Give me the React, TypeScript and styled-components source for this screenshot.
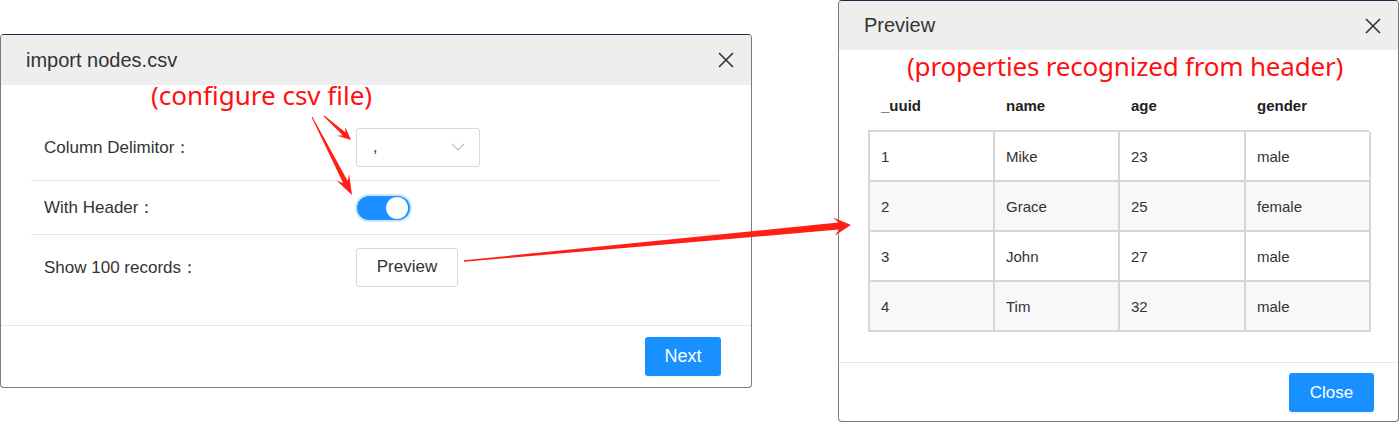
import React from "react";
import styled, { createGlobalStyle } from "styled-components";

const Global = createGlobalStyle`
  html, body { margin: 0; padding: 0; background: #ffffff; }
  body { font-family: "Liberation Sans", Arial, sans-serif; color: #333; }
  * { box-sizing: border-box; }
`;

const Canvas = styled.div`
  position: relative;
  width: 1400px;
  height: 422px;
  display: flex;
  align-items: flex-start;
  overflow: hidden;
`;

const Dialog = styled.div<{ $top: number; $left: number; $width: number }>`
  margin-top: ${(p) => p.$top}px;
  margin-left: ${(p) => p.$left}px;
  width: ${(p) => p.$width}px;
  background: #fff;
  border: 1px solid #7a7a7a;
  border-top-color: #1c2a4c;
  border-radius: 4px;
  display: flex;
  flex-direction: column;
  overflow: hidden;
`;

const Header = styled.div<{ $h: number }>`
  height: ${(p) => p.$h}px;
  background: #eeeeee;
  display: flex;
  align-items: center;
  justify-content: space-between;
  padding: 0 16px 0 25px;
`;

const Title = styled.div`
  font-size: 20px;
  color: #333;
`;

const CloseIcon = () => (
  <svg width="18" height="18" viewBox="0 0 18 18">
    <path d="M2 2 L16 16 M16 2 L2 16" stroke="#333" strokeWidth="1.6" fill="none" />
  </svg>
);

const FormBody = styled.div`
  padding: 29px 30px 26px 30px;
  display: flex;
  flex-direction: column;
`;

const FormRow = styled.div<{ $h: number; $divider?: boolean }>`
  height: ${(p) => p.$h}px;
  display: grid;
  grid-template-columns: 312px 1fr;
  align-items: center;
  padding-left: 13px;
  margin-right: 1px;
  border-bottom: ${(p) => (p.$divider ? "1px solid #e8e8e8" : "none")};
`;

const Label = styled.div`
  font-size: 17px;
  color: #333;
  white-space: nowrap;
`;

const Select = styled.div`
  width: 124px;
  height: 39px;
  border: 1px solid #d9d9d9;
  border-radius: 3px;
  display: flex;
  align-items: center;
  justify-content: space-between;
  padding: 0 14px 0 16px;
  font-size: 16px;
  color: #333;
`;

const Chevron = () => (
  <svg width="14" height="8" viewBox="0 0 14 8">
    <path d="M1 1 L7 7 L13 1" stroke="#bfbfbf" strokeWidth="1.2" fill="none" />
  </svg>
);

const Switch = styled.div`
  width: 53px;
  height: 24px;
  margin-left: 1px;
  border-radius: 12px;
  background: #1890ff;
  box-shadow: 0 0 0 2px rgba(24, 144, 255, 0.22);
  position: relative;
`;

const Knob = styled.div`
  position: absolute;
  right: 2px;
  top: 1px;
  width: 22px;
  height: 22px;
  border-radius: 50%;
  background: #fff;
`;

const GhostButton = styled.button`
  width: 102px;
  height: 39px;
  border: 1px solid #d9d9d9;
  border-radius: 3px;
  background: #fff;
  font-family: "Liberation Sans", Arial, sans-serif;
  font-size: 17px;
  color: #333;
  padding: 0;
`;

const Footer = styled.div<{ $pt: number; $pr: number; $pb: number }>`
  border-top: 1px solid #e8e8e8;
  display: flex;
  justify-content: flex-end;
  padding: ${(p) => `${p.$pt}px ${p.$pr}px ${p.$pb}px 0`};
`;

const PrimaryButton = styled.button<{ $w: number; $fs: number }>`
  width: ${(p) => p.$w}px;
  height: 39px;
  border: none;
  border-radius: 3px;
  background: #1890ff;
  color: #fff;
  font-family: "Liberation Sans", Arial, sans-serif;
  font-size: ${(p) => p.$fs}px;
  padding: 0;
  box-shadow: 0 2px 0 rgba(0, 0, 0, 0.04);
`;

const PreviewBody = styled.div`
  padding: 35px 28px 30px 29px;
  display: flex;
  flex-direction: column;
`;

const cols = "125px 125px 126px 125px";

const HeadRow = styled.div`
  display: grid;
  grid-template-columns: ${cols};
  height: 40px;
  align-items: center;
  margin-bottom: 5px;
`;

const HeadCell = styled.div`
  font-size: 15px;
  font-weight: bold;
  color: #222;
  padding-left: 13px;
`;

const Table = styled.div`
  display: grid;
  grid-template-columns: ${cols};
  border-top: 2px solid #d6d6d6;
  border-left: 2px solid #d6d6d6;
  width: 501px;
`;

const Cell = styled.div<{ $alt: boolean }>`
  height: 50px;
  display: flex;
  align-items: center;
  padding-left: 11px;
  font-size: 15px;
  color: #333;
  background: ${(p) => (p.$alt ? "#f8f8f8" : "#ffffff")};
  border-right: 2px solid #d6d6d6;
  border-bottom: 2px solid #d6d6d6;
`;

const Note = styled.div<{ $x: number; $y: number; $ls: number }>`
  position: absolute;
  left: ${(p) => p.$x}px;
  top: ${(p) => p.$y}px;
  font-family: "Noto Sans", "Noto Sans CJK SC", sans-serif;
  font-size: 26px;
  line-height: 30px;
  letter-spacing: ${(p) => p.$ls}px;
  color: #ff1010;
  white-space: nowrap;
`;

const Overlay = styled.svg`
  position: absolute;
  left: 0;
  top: 0;
  pointer-events: none;
`;

function arrow(sx: number, sy: number, tx: number, ty: number, ws: number, wh: number, hl: number, hw: number) {
  const dx = tx - sx;
  const dy = ty - sy;
  const L = Math.hypot(dx, dy);
  const ux = dx / L;
  const uy = dy / L;
  const nx = -uy;
  const ny = ux;
  const nX = tx - ux * hl * 0.72;
  const nY = ty - uy * hl * 0.72;
  const hX = tx - ux * hl;
  const hY = ty - uy * hl;
  const pts = [
    [sx + (nx * ws) / 2, sy + (ny * ws) / 2],
    [nX + (nx * wh) / 2, nY + (ny * wh) / 2],
    [hX + nx * hw, hY + ny * hw],
    [tx, ty],
    [hX - nx * hw, hY - ny * hw],
    [nX - (nx * wh) / 2, nY - (ny * wh) / 2],
    [sx - (nx * ws) / 2, sy - (ny * ws) / 2],
  ];
  return pts.map((p) => `${p[0].toFixed(1)},${p[1].toFixed(1)}`).join(" ");
}

const rows = [
  ["1", "Mike", "23", "male"],
  ["2", "Grace", "25", "female"],
  ["3", "John", "27", "male"],
  ["4", "Tim", "32", "male"],
];

export default function App() {
  return (
    <>
      <Global />
      <Canvas>
        <Dialog $top={34} $left={0} $width={752}>
          <Header $h={50}>
            <Title>import nodes.csv</Title>
            <CloseIcon />
          </Header>
          <FormBody>
            <FormRow $h={67} $divider>
              <Label>Column Delimitor：</Label>
              <Select>
                <span>,</span>
                <Chevron />
              </Select>
            </FormRow>
            <FormRow $h={54} $divider>
              <Label>With Header：</Label>
              <Switch>
                <Knob />
              </Switch>
            </FormRow>
            <FormRow $h={64}>
              <Label>Show 100 records：</Label>
              <GhostButton>Preview</GhostButton>
            </FormRow>
          </FormBody>
          <Footer $pt={11} $pr={30} $pb={11}>
            <PrimaryButton $w={76} $fs={18}>Next</PrimaryButton>
          </Footer>
        </Dialog>

        <Dialog $top={0} $left={86} $width={561}>
          <Header $h={49}>
            <Title>Preview</Title>
            <CloseIcon />
          </Header>
          <PreviewBody>
            <HeadRow>
              <HeadCell>_uuid</HeadCell>
              <HeadCell>name</HeadCell>
              <HeadCell>age</HeadCell>
              <HeadCell>gender</HeadCell>
            </HeadRow>
            <Table>
              {rows.map((r, i) =>
                r.map((c, j) => (
                  <Cell key={`${i}-${j}`} $alt={i % 2 === 1}>
                    {c}
                  </Cell>
                ))
              )}
            </Table>
          </PreviewBody>
          <Footer $pt={10} $pr={24} $pb={9}>
            <PrimaryButton $w={85} $fs={17}>Close</PrimaryButton>
          </Footer>
        </Dialog>

        <Note $x={151} $y={80} $ls={0}>(configure csv file)</Note>
        <Note $x={907} $y={51} $ls={-0.2}>(properties recognized from header)</Note>

        <Overlay width="1400" height="422" viewBox="0 0 1400 422">
          <polygon points={arrow(324, 116, 351, 140, 1, 4, 13, 6)} fill="#ff1f14" />
          <polygon points={arrow(312, 117, 352, 195, 1, 5, 20, 7)} fill="#ff1f14" />
          <polygon points={arrow(464, 261, 851, 225, 1.5, 7, 17, 9)} fill="#ff1f14" />
        </Overlay>
      </Canvas>
    </>
  );
}
